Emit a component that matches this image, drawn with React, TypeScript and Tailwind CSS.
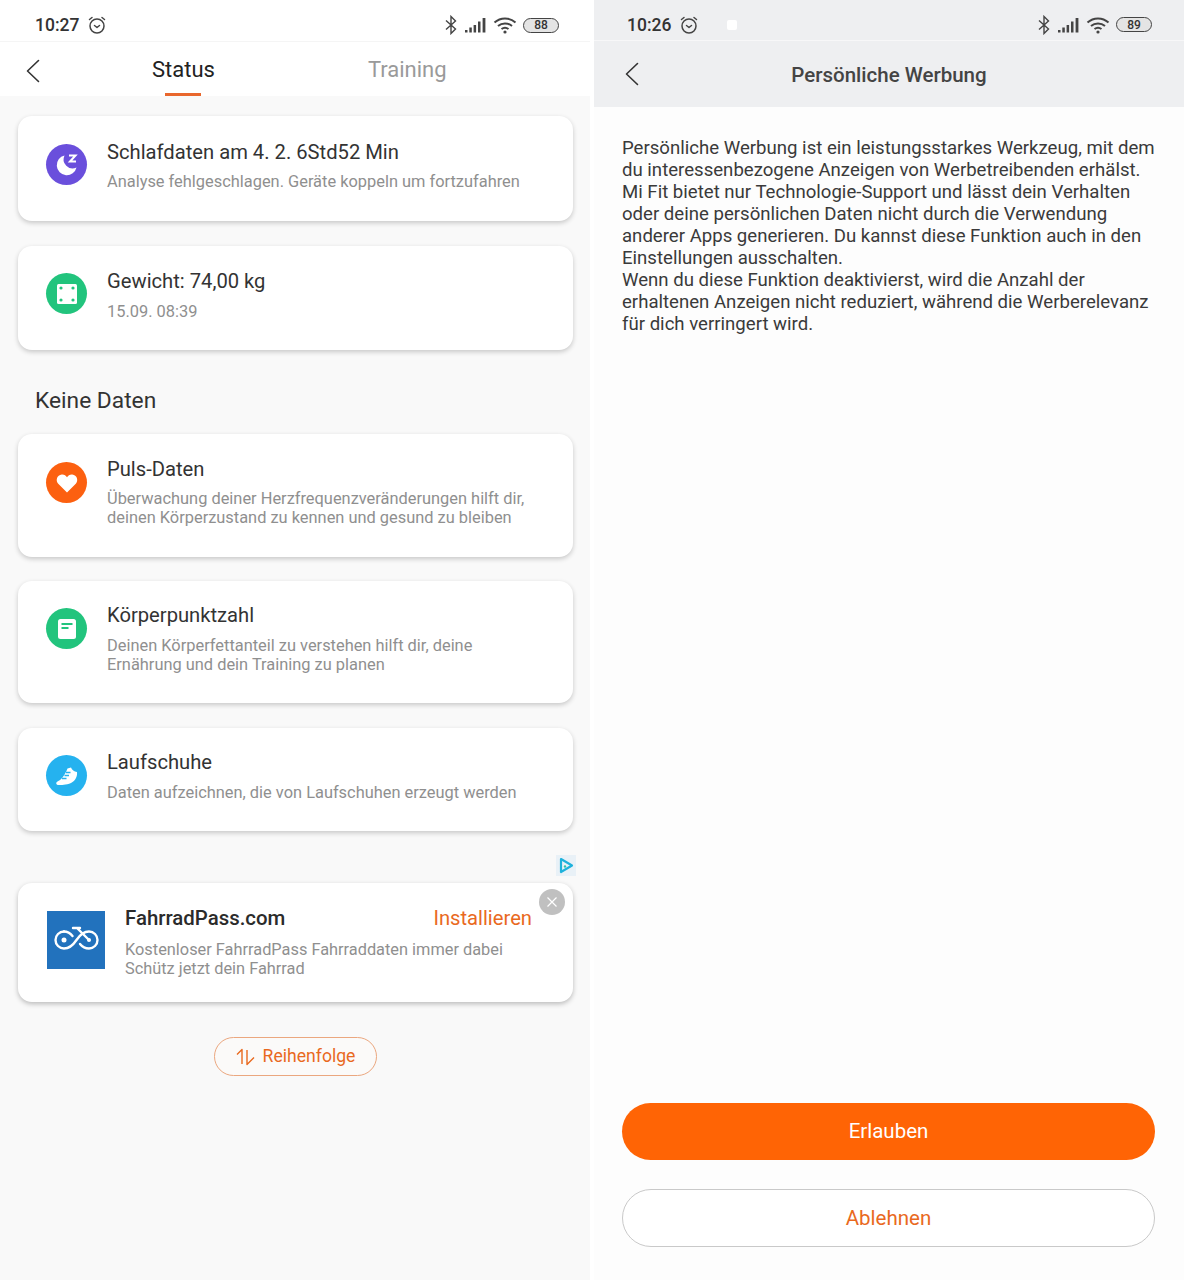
import React from "react";

const Alarm = ({ c = "#444" }: { c?: string }) => (
  <svg width="20" height="20" viewBox="0 0 20 20" fill="none" stroke={c} strokeWidth="1.5" strokeLinecap="round" strokeLinejoin="round">
    <circle cx="10" cy="11" r="7" />
    <path d="M7.5 10.5 10 12.5 12.5 10.5" />
    <path d="M2.5 4.5 5 2.5M17.5 4.5 15 2.5" />
  </svg>
);

const Bluetooth = () => (
  <svg width="14" height="20" viewBox="0 0 14 20" fill="none" stroke="#444" strokeWidth="1.4">
    <path d="M2 5.5 11.5 14 7 18.5V1.5L11.5 6 2 14.5" />
  </svg>
);

const Signal = () => (
  <svg width="22" height="16" viewBox="0 0 22 16" fill="#444">
    <rect x="0" y="13" width="2.5" height="2.5" />
    <rect x="4.3" y="10.5" width="2.5" height="5" />
    <rect x="8.6" y="8" width="2.5" height="7.5" />
    <rect x="13" y="4.5" width="2.5" height="11" />
    <rect x="17.6" y="1" width="2.8" height="14.5" />
  </svg>
);

const Wifi = () => (
  <svg width="24" height="18" viewBox="0 0 24 18" fill="none" stroke="#444" strokeWidth="2">
    <path d="M1.5 6.5C7.5 1 16.5 1 22.5 6.5" />
    <path d="M5 10C9 6.5 15 6.5 19 10" />
    <path d="M8.5 13C10.5 11.5 13.5 11.5 15.5 13" />
    <circle cx="12" cy="16" r="1.6" fill="#444" stroke="none" />
  </svg>
);

const Battery = ({ n }: { n: string }) => (
  <div className="w-[36px] h-[15px] rounded-full border border-[#444] bg-[#e4e4e4] flex items-center justify-center text-[12px] leading-none text-[#333]">
    {n}
  </div>
);

const StatusBar = ({ time, n, extra, cls }: { time: string; n: string; extra?: boolean; cls: string }) => (
  <div className={`h-[41px] flex items-center pt-[9px] font-medium ${cls}`}>
    <span className="mt-[2px] text-[17.5px] leading-none text-[#333]">{time}</span>
    <span className="ml-[8px] flex"><Alarm /></span>
    {extra && <span className="ml-[28px] w-[10px] h-[10px] rounded-[2px] bg-white" />}
    <div className="ml-auto flex items-center">
      <Bluetooth />
      <span className="ml-[7px] flex"><Signal /></span>
      <span className="ml-[6px] flex"><Wifi /></span>
      <span className="ml-[6px] flex"><Battery n={n} /></span>
    </div>
  </div>
);

const Back = () => (
  <svg width="14" height="24" viewBox="0 0 14 24" fill="none" stroke="#333" strokeWidth="1.6" strokeLinecap="round" strokeLinejoin="round">
    <path d="M12.5 1.5 1.5 12 12.5 22.5" />
  </svg>
);

const IconCircle = ({ bg, cls, children }: { bg: string; cls: string; children: React.ReactNode }) => (
  <div className={`w-[41px] h-[41px] rounded-full flex items-center justify-center shrink-0 ${bg} ${cls}`}>{children}</div>
);

const Moon = () => (
  <svg width="41" height="41" viewBox="0 0 41 41">
    <path d="M18.5 11.5a10 10 0 1 0 12 12 9 9 0 0 1-12-12z" fill="#fff" />
    <path d="M23 11.5h6.5l-5.5 6h6" fill="none" stroke="#fff" strokeWidth="2" />
  </svg>
);

const Scale = () => (
  <svg width="24" height="24" viewBox="0 0 24 24">
    <rect x="2" y="2" width="20" height="20" rx="1.5" fill="#fff" />
    <circle cx="6" cy="6" r="1.6" fill="#22c47d" />
    <circle cx="18" cy="6" r="1.6" fill="#22c47d" />
    <circle cx="6" cy="18" r="1.6" fill="#22c47d" />
    <circle cx="18" cy="18" r="1.6" fill="#22c47d" />
  </svg>
);

const Heart = () => (
  <svg width="24" height="24" viewBox="0 0 24 24">
    <path d="M12 21.5 3 12.5C.5 9.5 1.8 4 6.8 3.5 9 3.3 11 4.5 12 6.3 13 4.5 15 3.3 17.2 3.5 22.2 4 23.5 9.5 21 12.5z" fill="#fff" />
  </svg>
);

const Book = () => (
  <svg width="20" height="22" viewBox="0 0 20 22">
    <rect x="1" y="1" width="18" height="20" rx="2.5" fill="#fff" />
    <rect x="4.5" y="5" width="11" height="2" fill="#22c47d" />
    <rect x="4.5" y="9" width="7" height="2" fill="#22c47d" />
  </svg>
);

const Shoe = () => (
  <svg width="41" height="41" viewBox="0 0 41 41">
    <path d="M21.5 13.5 25 12.5C26 15 28 16.5 31 17 31.5 21 29.5 26 25 28 20 30 15 30 12.5 30 10 30 9.5 27.5 11.5 26.5 15 25 18.5 21 21.5 13.5Z" fill="#fff" />
    <path d="M20 17.5h4.500M18.500 20.500h4.500M16 23.500h4.500" stroke="#25b2ef" strokeWidth="1.4" />
  </svg>
);

const Card = ({ h, icon, title, sub, pt, gap }: { h: string; icon: React.ReactNode; title: string; sub: string[]; pt: string; gap: string }) => (
  <div className={`rounded-[14px] bg-white shadow-[0_2px_5px_rgba(0,0,0,0.2)] flex pl-[28px] pr-[20px] ${h} ${pt}`}>
    {icon}
    <div className="ml-[20px]">
      <div className="text-[20.2px] leading-[26px] text-[#333]">{title}</div>
      <div className={`text-[16.4px] leading-[19px] text-[#8f8f8f] ${gap}`}>
        {sub.map((s) => (
          <div key={s}>{s}</div>
        ))}
      </div>
    </div>
  </div>
);

export default function App() {
  return (
    <div className="w-[1184px] h-[1280px] bg-white flex overflow-hidden font-['Roboto',sans-serif]">
      <div className="w-[590px] shrink-0 flex flex-col">
        <StatusBar time="10:27" n="88" cls="bg-white pl-[35px] pr-[31px]" />
        <div className="h-[55px] pt-[1px] bg-white border-t border-[#f5f5f5] flex items-center relative shrink-0">
          <span className="ml-[26px] mt-[3px] flex"><Back /></span>
          <div className="ml-[112px] relative h-full flex items-center">
            <span className="text-[22px] text-[#222]">Status</span>
            <span className="absolute left-[13px] bottom-0 w-[36px] h-[3px] bg-[#e9672d]" />
          </div>
          <span className="ml-[153px] text-[22px] text-[#9a9a9a]">Training</span>
        </div>
        <div className="flex-1 bg-[#f9f9f9] px-[18px] pr-[17px] pt-[20px] flex flex-col">
          <Card
            h="h-[105px]"
            pt="pt-[23px]"
            gap="mt-[7px]"
            icon={<IconCircle bg="bg-[#6a4fdc]" cls="mt-[5px]"><Moon /></IconCircle>}
            title="Schlafdaten am 4. 2. 6Std52 Min"
            sub={["Analyse fehlgeschlagen. Geräte koppeln um fortzufahren"]}
          />
          <div className="mt-[25px]">
            <Card
              h="h-[104px]"
              pt="pt-[22px]"
              gap="mt-[8px]"
              icon={<IconCircle bg="bg-[#22c47d]" cls="mt-[5px]"><Scale /></IconCircle>}
              title="Gewicht: 74,00 kg"
              sub={["15.09. 08:39"]}
            />
          </div>
          <div className="mt-[37px] ml-[17px] text-[22.75px] leading-[28px] text-[#333]">Keine Daten</div>
          <div className="mt-[19px]">
            <Card
              h="h-[123px]"
              pt="pt-[22px]"
              gap="mt-[7px]"
              icon={<IconCircle bg="bg-[#fc6010]" cls="mt-[6px]"><Heart /></IconCircle>}
              title="Puls-Daten"
              sub={["Überwachung deiner Herzfrequenzveränderungen hilft dir,", "deinen Körperzustand zu kennen und gesund zu bleiben"]}
            />
          </div>
          <div className="mt-[24px]">
            <Card
              h="h-[122px]"
              pt="pt-[21px]"
              gap="mt-[8px]"
              icon={<IconCircle bg="bg-[#22c47d]" cls="mt-[6px]"><Book /></IconCircle>}
              title="Körperpunktzahl"
              sub={["Deinen Körperfettanteil zu verstehen hilft dir, deine", "Ernährung und dein Training zu planen"]}
            />
          </div>
          <div className="mt-[25px]">
            <Card
              h="h-[103px]"
              pt="pt-[21px]"
              gap="mt-[8px]"
              icon={<IconCircle bg="bg-[#25b2ef]" cls="mt-[6px]"><Shoe /></IconCircle>}
              title="Laufschuhe"
              sub={["Daten aufzeichnen, die von Laufschuhen erzeugt werden"]}
            />
          </div>
          <div className="mt-[24px] h-[21px] flex justify-end">
            <div className="w-[20px] h-[21px] -mr-[3px] bg-[#e9f1f7] flex items-center justify-center">
              <svg width="15" height="17" viewBox="0 0 15 17" fill="none" stroke="#1fb2dc" strokeWidth="2.2" strokeLinejoin="round">
                <path d="M2 2 13 8.5 2 15z" />
                <circle cx="6" cy="9.5" r="1.2" fill="#2fc4a8" stroke="none" />
              </svg>
            </div>
          </div>
          <div className="mt-[7px] h-[119px] relative rounded-[14px] bg-white shadow-[0_2px_5px_rgba(0,0,0,0.25)] flex pl-[29px] pt-[28px]">
            <div className="w-[58px] h-[58px] bg-[#2272bd] shrink-0">
              <svg width="58" height="58" viewBox="0 0 58 58" fill="none" stroke="#fff" strokeWidth="2.4" strokeLinecap="round">
                <path d="M17 20.5a8.5 8.5 0 1 0 0 17c6 0 9.5-4 12.5-8.5s6.5-8.5 12.5-8.5a8.5 8.5 0 1 1 0 17c-4 0-7-2-9-4.5" />
                <path d="M17 20.5c4 0 6.5 2 8.500 4.500" />
                <path d="M26 17h7M30 17 42 29" />
                <circle cx="17" cy="29" r="2.5" fill="#fff" stroke="none" />
                <circle cx="42" cy="29" r="2" fill="#fff" stroke="none" />
              </svg>
            </div>
            <div className="ml-[20px] -mt-[1px] w-[407px]">
              <div className="flex items-center justify-between h-[16px]">
                <span className="text-[20.4px] font-medium text-[#2b2b2b]">FahrradPass.com</span>
                <span className="text-[20.2px] text-[#e9691e]">Installieren</span>
              </div>
              <div className="mt-[14px] text-[16.35px] leading-[19px] text-[#8f8f8f]">
                <div>Kostenloser FahrradPass Fahrraddaten immer dabei</div>
                <div>Schütz jetzt dein Fahrrad</div>
              </div>
            </div>
            <div className="absolute right-[8px] top-[6px] w-[26px] h-[26px] rounded-full bg-[#c0c0c0] flex items-center justify-center">
              <svg width="12" height="12" viewBox="0 0 12 12" stroke="#fff" strokeWidth="1.2">
                <path d="M1.5 1.5 10.5 10.5M10.5 1.5 1.5 10.5" />
              </svg>
            </div>
          </div>
          <div className="mt-[35px] self-center w-[163px] h-[39px] rounded-full border border-[#eba77f] flex items-center justify-center gap-[7px] text-[17.6px] text-[#e9691e] bg-[#fbfaf9]">
            <svg width="20" height="18" viewBox="0 0 20 18" fill="none" stroke="#e9691e" strokeWidth="1.4" strokeLinejoin="round">
              <path d="M1 6.5 6 1.5V16" />
              <path d="M11 2V16.5L18 9.5" />
            </svg>
            <span>Reihenfolge</span>
          </div>
        </div>
      </div>
      <div className="w-[590px] ml-[4px] shrink-0 flex flex-col">
        <StatusBar time="10:26" n="89" extra cls="bg-[#eeeff1] pl-[33px] pr-[32px] border-b border-[#f7f7f8]" />
        <div className="h-[66px] bg-[#eeeff1] flex items-center relative shrink-0">
          <span className="ml-[31px] flex"><Back /></span>
          <span className="absolute left-0 right-0 top-[19px] text-center text-[20.5px] font-medium text-[#444]">Persönliche Werbung</span>
        </div>
        <div className="flex-1 bg-[#fdfdfd] flex flex-col pl-[28px] pr-[29px] pt-[30px]">
          <div className="-mr-[4px] text-[18.6px] leading-[22px] text-[#3a3a3a]">
            <p>Persönliche Werbung ist ein leistungsstarkes Werkzeug, mit dem du interessenbezogene Anzeigen von Werbetreibenden erhälst. Mi Fit bietet nur Technologie-Support und lässt dein Verhalten oder deine persönlichen Daten nicht durch die Verwendung anderer Apps generieren. Du kannst diese Funktion auch in den Einstellungen ausschalten.</p>
            <p>Wenn du diese Funktion deaktivierst, wird die Anzahl der erhaltenen Anzeigen nicht reduziert, während die Werberelevanz für dich verringert wird.</p>
          </div>
          <div className="mt-auto h-[57px] rounded-full bg-[#ff6405] flex items-center justify-center text-[20.5px] text-white">Erlauben</div>
          <div className="mt-[29px] mb-[33px] h-[58px] rounded-full bg-white border border-[#c9c9c9] flex items-center justify-center text-[20.5px] text-[#e9691e]">Ablehnen</div>
        </div>
      </div>
    </div>
  );
}
